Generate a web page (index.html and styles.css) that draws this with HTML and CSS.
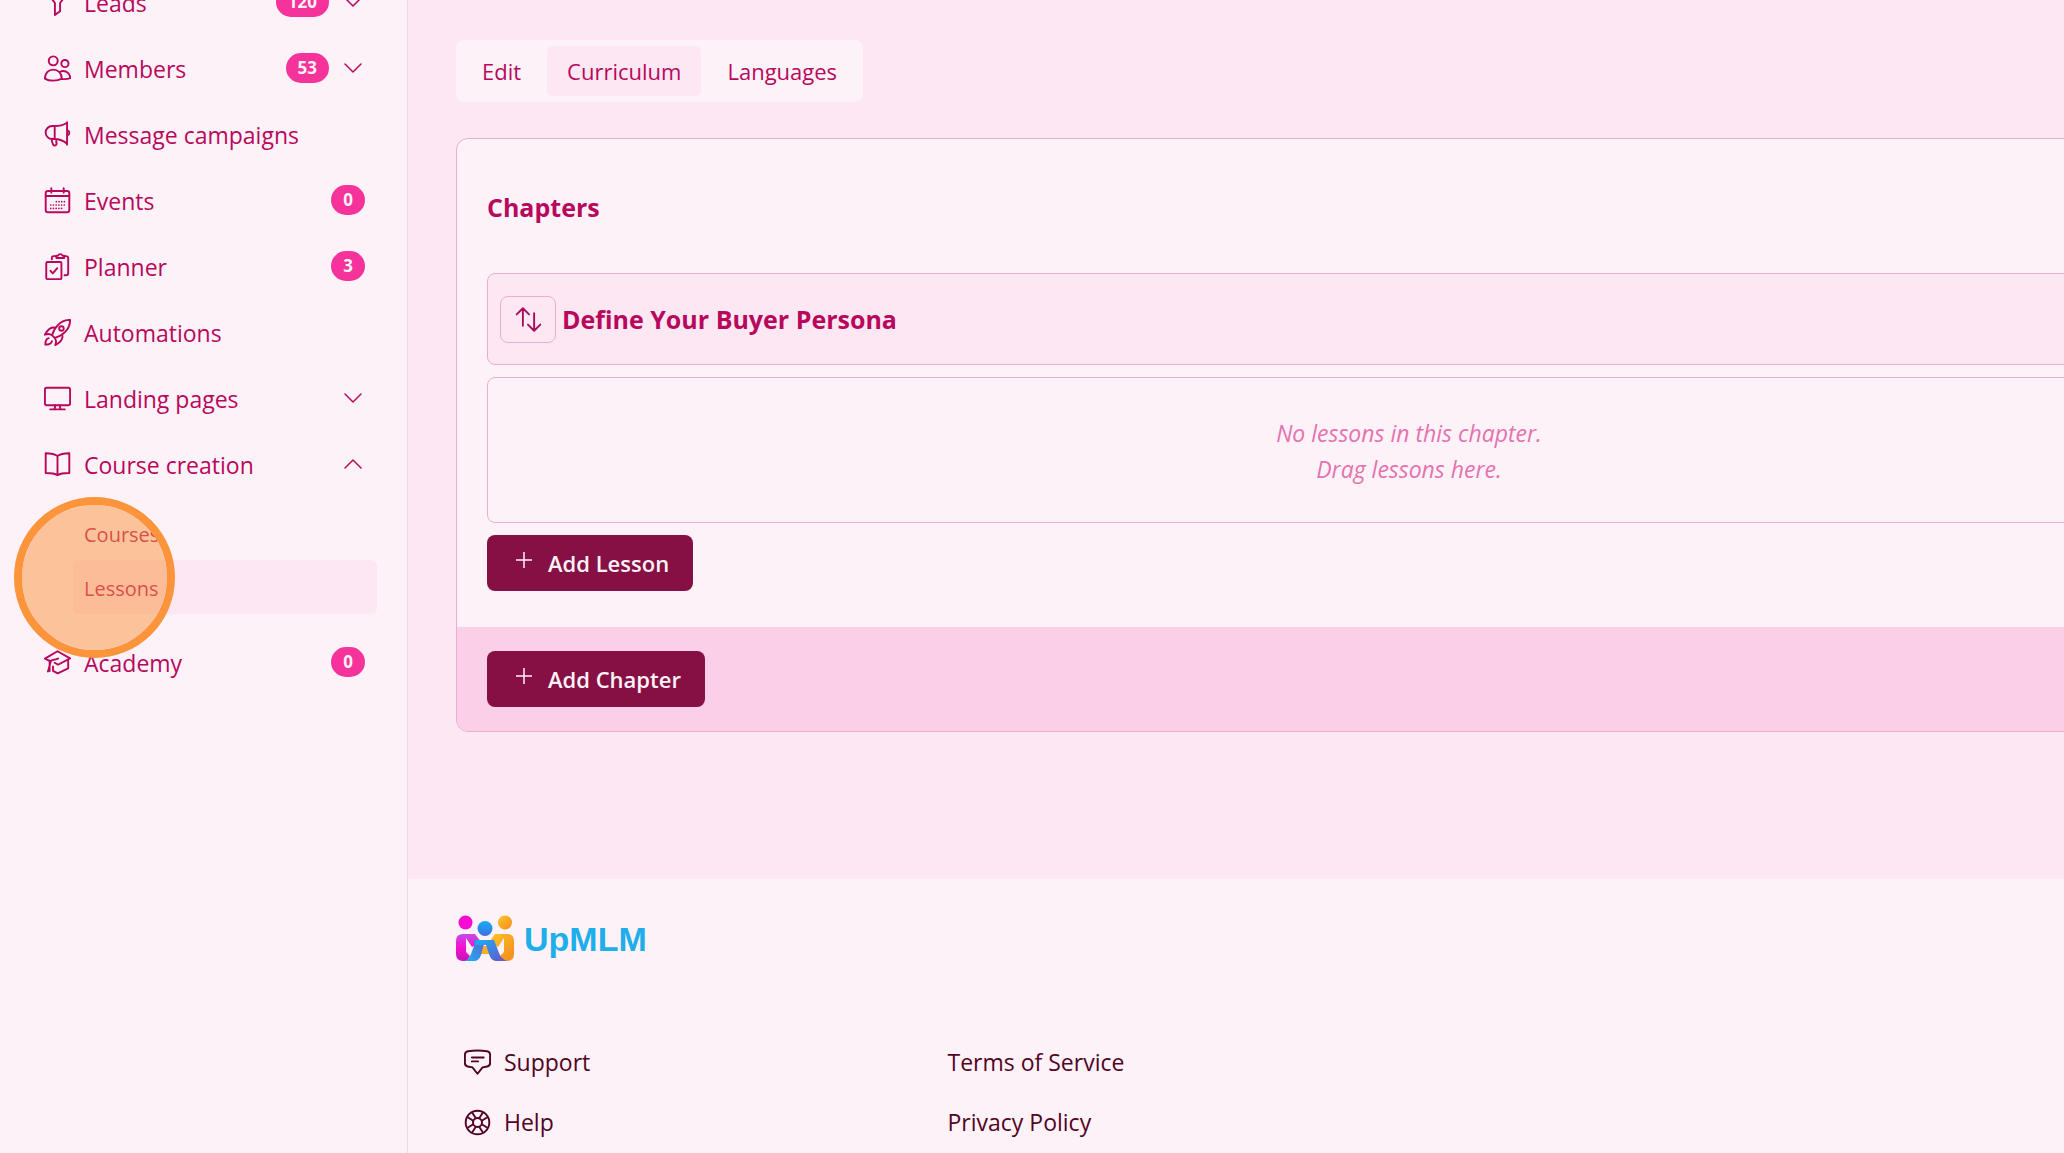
FILE: index.html
```html
<!DOCTYPE html>
<html lang="en">
<head>
    <meta charset="UTF-8">
    <meta name="viewport" content="width=device-width, initial-scale=1.0">
    <title>Curriculum</title>
    <link rel="stylesheet" href="styles.css">
</head>
<body>
    <div class="layout">
        <aside class="sidebar">
            <nav class="menu">
                <a class="menu-item" href="#">
                    <svg class="icon" viewBox="0 0 24 24"><path d="M1.500 1h21l-8.200 11.500v7.200L9.700 23V12.500z"/></svg>
                    <span class="label">Leads</span>
                    <span class="badge">120</span>
                    <svg class="chevron" viewBox="0 0 24 24"><path d="M4 8l8 8 8-8"/></svg>
                </a>
                <a class="menu-item" href="#">
                    <svg class="icon" viewBox="0 0 24 24"><circle cx="8.200" cy="5.200" r="4"/><circle cx="18.600" cy="7.600" r="3.200"/><path d="M.8 21c0-4.600 3-8 7.400-8s7.600 3.400 7.600 8c-2 1.200-4.600 1.800-7.600 1.800S2.600 22.200.8 21zM13.700 15.300a6.200 6.200 0 0 1 9.600 5.200c-2.200 1-4.900 1.100-7.500.8"/></svg>
                    <span class="label">Members</span>
                    <span class="badge">53</span>
                    <svg class="chevron" viewBox="0 0 24 24"><path d="M4 8l8 8 8-8"/></svg>
                </a>
                <a class="menu-item" href="#">
                    <svg class="icon" viewBox="0 0 24 24"><path d="M9.500 4.500H7.200a5.700 5.700 0 0 0 0 11.500h2.300zM9.500 4.500c4 0 7.800-1 11-3v18.700c-3.200-2.600-7-4.100-11-4.200M20.500 1v20M21.300 8.500c1.600.6 1.600 3.400 0 4M6.800 16c.1 2 .6 3.600 1.400 5.200 1 1.200 3.200.4 3-1.200-.4-1.200-.4-2.500-.2-3.900"/></svg>
                    <span class="label">Message campaigns</span>
                </a>
                <a class="menu-item" href="#">
                    <svg class="icon" viewBox="0 0 24 24"><rect x="1.500" y="3.500" width="21" height="19" rx="2"/><path d="M1.500 8h21M6.500 1v4M17.500 1v4"/><path class="dots" d="M11 13h8M6 16h13M6 19h10"/></svg>
                    <span class="label">Events</span>
                    <span class="badge">0</span>
                </a>
                <a class="menu-item" href="#">
                    <svg class="icon" viewBox="0 0 24 24"><rect x="2" y="8" width="13.500" height="15.200" rx="1"/><path d="M5.800 15.800l2 2.300 4-4.600M7 5.500V4.300A1.500 1.500 0 0 1 8.500 2.800H11M17.500 2.800h2A2 2 0 0 1 21.500 4.800v13a2 2 0 0 1-2 2h-1.300"/><path d="M11 4.500V2.300h1.500a2.200 2.200 0 0 1 4 0H18v2.200z"/></svg>
                    <span class="label">Planner</span>
                    <span class="badge">3</span>
                </a>
                <a class="menu-item" href="#">
                    <svg class="icon" viewBox="0 0 24 24"><path d="M7.200 14.500C8.700 8.500 14 .8 23.200.8c0 9.200-7.700 14.500-13.700 16zM9.700 7.800C5.800 6.600 3.300 9.300.8 14c2.200-1 4.400-1 6.400.5M16.200 14.300c1.200 3.900-1.500 6.400-6.200 8.900 1-2.200 1-4.400-.5-6.400M4.200 17c-2.400.5-3 3-3 5.800 2.800 0 5.300-.6 5.800-3"/><circle cx="15.500" cy="8.500" r="2"/></svg>
                    <span class="label">Automations</span>
                </a>
                <a class="menu-item" href="#">
                    <svg class="icon" viewBox="0 0 24 24"><rect x=".8" y="2.500" width="22.400" height="15.500" rx="1.500"/><path d="M10 18l-.6 3.700M14 18l.6 3.700M5.500 21.700h13"/></svg>
                    <span class="label">Landing pages</span>
                    <svg class="chevron" viewBox="0 0 24 24"><path d="M4 8l8 8 8-8"/></svg>
                </a>
                <a class="menu-item" href="#">
                    <svg class="icon" viewBox="0 0 24 24"><path d="M12 4.500C9.500 2.500 6 2 1.500 2v17.500c4.500 0 8 .3 10.500 2 2.500-1.700 6-2 10.500-2V2C18 2 14.500 2.500 12 4.500zM12 4.500v17"/></svg>
                    <span class="label">Course creation</span>
                    <svg class="chevron" viewBox="0 0 24 24"><path d="M4 16l8-8 8 8"/></svg>
                </a>
                <div class="submenu">
                    <a class="submenu-item" href="#">Courses</a>
                    <a class="submenu-item active" href="#">Lessons</a>
                    <span class="click-marker"></span>
                </div>
                <a class="menu-item" href="#">
                    <svg class="icon" viewBox="0 0 24 24"><path d="M5 10.500L.8 8.500 12 2l11.200 6.300L12.500 14l-3-1.800M12.500 8.500C10.500 9.800 8 9 6.200 10.500c-1 2.500-1.400 6-2.700 9.500M5 10.500v9M8 15.500v4l4.200 2.200 9.300-4.400V9.500"/></svg>
                    <span class="label">Academy</span>
                    <span class="badge">0</span>
                </a>
            </nav>
        </aside>

        <div class="page">
            <main class="content">
                <nav class="tabs">
                    <a class="tab" href="#">Edit</a>
                    <a class="tab active" href="#">Curriculum</a>
                    <a class="tab" href="#">Languages</a>
                </nav>

                <section class="card">
                    <div class="card-body">
                        <h2 class="card-title">Chapters</h2>
                        <div class="chapter">
                            <button class="move-button" type="button" aria-label="Move chapter">
                                <svg class="icon" viewBox="0 0 24 24"><path d="M7 17.500V2M1.500 7.500L7 2l5.500 5.500M17 6.500V22M11.500 16.500L17 22l5.500-5.500"/></svg>
                            </button>
                            <h3 class="chapter-title">Define Your Buyer Persona</h3>
                        </div>
                        <div class="lessons">
                            <p>No lessons in this chapter.</p>
                            <p>Drag lessons here.</p>
                        </div>
                        <button class="button" type="button">
                            <svg class="plus" viewBox="0 0 16 16"><path d="M8 0v16M0 8h16"/></svg>
                            Add Lesson
                        </button>
                    </div>
                    <div class="card-footer">
                        <button class="button" type="button">
                            <svg class="plus" viewBox="0 0 16 16"><path d="M8 0v16M0 8h16"/></svg>
                            Add Chapter
                        </button>
                    </div>
                </section>
            </main>

            <footer class="footer">
                <a class="logo" href="#">
                    <svg class="logo-mark" viewBox="0 0 58 47">
                        <defs>
                            <linearGradient id="pink" x1="0" y1="0" x2="0" y2="1"><stop offset="0" stop-color="#c44be8"/><stop offset=".5" stop-color="#f50fd0"/><stop offset="1" stop-color="#c416b8"/></linearGradient>
                            <linearGradient id="gold" x1="0" y1="0" x2="1" y2="1"><stop offset="0" stop-color="#fdc52a"/><stop offset="1" stop-color="#f58a1c"/></linearGradient>
                            <linearGradient id="blue" x1="0" y1="0" x2="0" y2="1"><stop offset="0" stop-color="#15b0f5"/><stop offset="1" stop-color="#3d6ee0"/></linearGradient>
                            <linearGradient id="left" x1="1" y1="0" x2="0" y2="1"><stop offset="0" stop-color="#5a62d8"/><stop offset="1" stop-color="#19b5f0"/></linearGradient>
                            <linearGradient id="right" x1="0" y1="0" x2="1" y2="1"><stop offset="0" stop-color="#17b2f3"/><stop offset="1" stop-color="#6b50cc"/></linearGradient>
                        </defs>
                        <circle cx="9.500" cy="7.500" r="7" fill="#f70bd3"/>
                        <circle cx="49" cy="7.500" r="7" fill="url(#gold)"/>
                        <circle cx="29" cy="13.500" r="7.500" fill="url(#blue)"/>
                        <path d="M25 31h8l3 8H23z" fill="#f9ad22"/>
                        <path d="M7 19h12l6 8-9 5-6-9v14l4 4-3 5H7q-7 0-7-7V26q0-7 7-7z" fill="url(#pink)"/>
                        <path d="M51 19H39l-6 8 9 5 6-9v14l-4 4 3 5h4q7 0 7-7V26q0-7-7-7z" fill="url(#gold)"/>
                        <path d="M18 25h11l-4 15q-2 6-7 6H8q5-1 7-7l3-8z" fill="url(#left)"/>
                        <path d="M20 25h18l5 13q2 6 8 8H40q-5 0-7-7l-3-9H19z" fill="url(#right)"/>
                    </svg>
                    <span class="logo-text">UpMLM</span>
                </a>
                <div class="footer-links">
                    <div class="footer-column">
                        <a class="footer-link" href="#">
                            <svg class="icon" viewBox="0 0 24 24"><path d="M3.500 2q8.500-1.200 17 0Q23 2.300 23.200 5v7.500q0 2.500-2.500 3l-4.200.8L12 22l-4.500-5.700-4.200-.8q-2.500-.5-2.500-3V5Q1 2.300 3.500 2zM7 7.500h10.500M7 11h5.500"/></svg>
                            Support
                        </a>
                        <a class="footer-link" href="#">
                            <svg class="icon" viewBox="0 0 24 24"><circle cx="12" cy="12" r="10.500"/><circle cx="12" cy="12" r="4"/><path d="M8.200 10.500L3.600 7.500M10.500 8.200L7.500 3.600M13.500 8.200l3-4.600M15.800 10.500l4.600-3M15.800 13.500l4.600 3M13.500 15.800l3 4.600M10.500 15.800l-3 4.600M8.200 13.500l-4.600 3"/></svg>
                            Help
                        </a>
                    </div>
                    <div class="footer-column">
                        <a class="footer-link" href="#">Terms of Service</a>
                        <a class="footer-link" href="#">Privacy Policy</a>
                    </div>
                </div>
            </footer>
        </div>
    </div>
</body>
</html>
```
FILE: styles.css
```css
* {
    box-sizing: border-box;
}

body {
    margin: 0;
    overflow: hidden;
    background-color: #fce7f3;
    color: #b8085c;
    font-family: "Segoe UI", "Open Sans", "Noto Sans", sans-serif;
    font-size: 23px;
    line-height: 36px;
}

a {
    color: inherit;
    text-decoration: none;
}

h2, h3, p {
    margin: 0;
}

button {
    font-family: inherit;
    cursor: pointer;
}

svg {
    flex-shrink: 0;
    fill: none;
    stroke: currentColor;
    stroke-linecap: round;
    stroke-linejoin: round;
}

.icon {
    width: 27px;
    height: 27px;
    stroke-width: 1.7;
}

.dots {
    stroke-width: 1.5;
    stroke-dasharray: 0 2.4;
}

/* wider than the window, the card runs off to the right */
.layout {
    display: flex;
    min-width: 2410px;
    height: 100vh;
}

.sidebar {
    flex: 0 0 408px;
    padding: 0 30px;
    background-color: #fdf2f8;
    border-right: 1px solid #f3d3e8;
}

/* menu is scrolled down a little */
.menu {
    margin-top: -31px;
}

.menu-item {
    display: flex;
    align-items: center;
    height: 66px;
    padding: 0 12px 0 14px;
}

.label {
    flex: 1;
    padding: 2px 0 0 13px;
}

.badge {
    height: 30px;
    padding: 0 12px;
    border-radius: 15px;
    background-color: #f6339a;
    color: #fdf2f8;
    font-size: 17px;
    font-weight: 700;
    line-height: 30px;
}

.chevron {
    width: 24px;
    height: 24px;
    margin-left: 12px;
    stroke-width: 1.5;
}

.submenu {
    position: relative;
    padding: 9px 0 15px 43px;
}

.submenu-item {
    display: block;
    height: 54px;
    padding: 0 11px;
    border-radius: 6px;
    font-size: 20px;
    line-height: 58px;
}

.submenu-item.active {
    background-color: #fce7f3;
}

.click-marker {
    position: absolute;
    top: 0;
    left: -16px;
    width: 161px;
    height: 161px;
    border: 8px solid #fb943b;
    border-radius: 50%;
    background-color: rgba(251, 146, 60, 0.5);
    background-clip: padding-box;
    pointer-events: none;
}

.page {
    display: flex;
    flex: 1;
    flex-direction: column;
}

.content {
    padding: 40px 48px 147px;
}

.tabs {
    display: flex;
    gap: 6px;
    width: fit-content;
    padding: 6px;
    border-radius: 8px;
    background-color: #fdf2f8;
}

.tab {
    padding: 7px 20px;
    border-radius: 6px;
    font-size: 22px;
}

.tab.active {
    background-color: #fce7f3;
}

.card {
    margin-top: 36px;
    border: 1px solid #ebaed3;
    border-radius: 12px;
    overflow: hidden;
    background-color: #fdf2f8;
}

.card-body {
    padding: 50px 30px 36px;
}

.card-title,
.chapter-title {
    font-size: 25px;
    font-weight: 700;
    line-height: 36px;
}

.chapter {
    display: flex;
    align-items: center;
    gap: 6px;
    height: 92px;
    margin: 48px 0 12px;
    padding: 0 12px;
    border: 1px solid #ebaed3;
    border-radius: 8px;
    background-color: #fce7f3;
}

.move-button {
    display: flex;
    align-items: center;
    justify-content: center;
    width: 56px;
    height: 47px;
    padding: 0;
    border: 1px solid #ebaed3;
    border-radius: 8px;
    background-color: transparent;
    color: #a5105a;
}

.lessons {
    margin-bottom: 12px;
    padding: 37px 0 35px;
    border: 1px solid #ebaed3;
    border-radius: 8px;
    color: #e573b0;
    font-style: italic;
    text-align: center;
}

.button {
    display: flex;
    align-items: center;
    gap: 16px;
    height: 56px;
    padding: 0 24px 0 29px;
    border: none;
    border-radius: 8px;
    background-color: #861043;
    color: #fdf2f8;
    font-size: 22px;
    font-weight: 600;
}

.plus {
    width: 16px;
    height: 16px;
    margin-bottom: 6px;
    stroke-width: 1.5;
}

.card-footer {
    padding: 24px 30px;
    background-color: #fbcfe8;
}

.footer {
    flex: 1;
    padding: 36px 48px 0;
    background-color: #fdf2f8;
    color: #510424;
}

.logo {
    display: flex;
    align-items: center;
    gap: 10px;
}

.logo-mark {
    width: 58px;
    height: 47px;
    stroke: none;
}

.logo-text {
    color: #1eaeea;
    font-family: "Liberation Sans", Arial, sans-serif;
    font-size: 34px;
    font-weight: 700;
}

.footer-links {
    display: grid;
    grid-template-columns: repeat(4, 1fr);
    gap: 36px;
    margin-top: 70px;
    padding-left: 8px;
}

.footer-link {
    display: flex;
    align-items: center;
    gap: 13px;
    height: 60px;
}
```
